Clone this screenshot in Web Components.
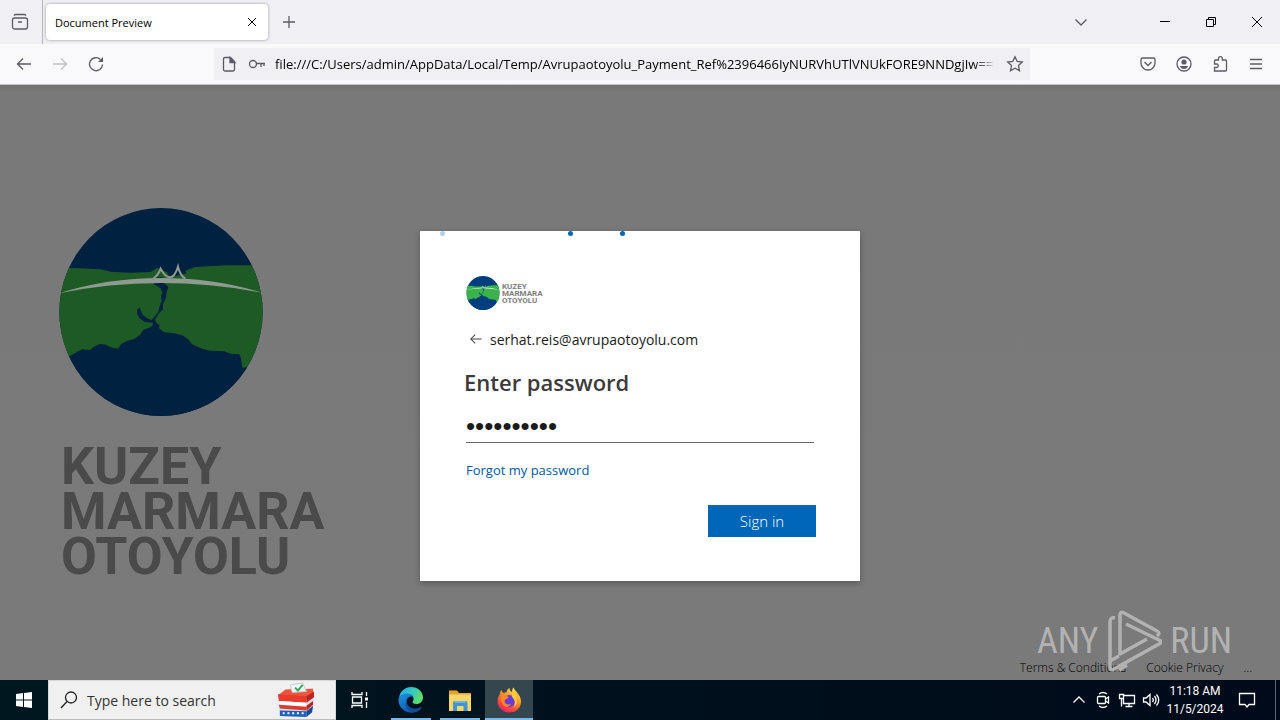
<!DOCTYPE html>
<html lang="en">
<head>
<meta charset="utf-8">
<title>Document Preview</title>
<style>
  body {
    margin: 0;
    font-family: "Open Sans", "Noto Sans", sans-serif;
    color: #15141a;
  }
</style>
</head>
<body>
<desktop-screen>
  <tab-strip slot="browser" label="Document Preview"></tab-strip>
  <nav-bar slot="browser" url="file:///C:/Users/admin/AppData/Local/Temp/Avrupaotoyolu_Payment_Ref%2396466IyNURVhUTlVNUkFORE9NNDgjIw=="></nav-bar>
  <page-view>
    <brand-logo slot="backdrop" stacked></brand-logo>
    <signin-card email="serhat.reis@avrupaotoyolu.com">
      <brand-logo></brand-logo>
    </signin-card>
    <page-footer slot="footer"></page-footer>
    <sandbox-mark slot="mark"></sandbox-mark>
  </page-view>
  <task-bar slot="taskbar"></task-bar>
</desktop-screen>

<script>
const ICONS = {
  archive: `<rect x="2.500" y="6" width="15" height="11" rx="2"/><path d="M4 3.500Q4.500 2.500 6 2.500h8q1.500 0 2 1M8 10h4"/>`,
  close: `<path d="M6 6l8 8M14 6l-8 8"/>`,
  plus: `<path d="M10 4v12M4 10h12"/>`,
  chevron: `<path d="M4.500 7.500L10 13l5.500-5.500"/>`,
  up: `<path d="M4.500 12.500L10 7l5.500 5.500"/>`,
  min: `<path d="M5 9.500h10"/>`,
  restore: `<path d="M5.500 7.500h7v7h-7zM7.500 7.500v-2h7v7h-2"/>`,
  winclose: `<path d="M5 5l10 10M15 5L5 15"/>`,
  back: `<path d="M17 10H3.500M9 4.500L3.500 10 9 15.500"/>`,
  forward: `<path d="M3 10h13.500M11 4.500l5.500 5.500-5.500 5.500"/>`,
  reload: `<path d="M16.500 10.500a6.500 6.500 0 1 1-2-5"/><path d="M17 3v5h-5z" fill="currentColor" stroke="none"/>`,
  file: `<path d="M6 3.500h5.500l4 4v8a1.500 1.500 0 0 1-1.500 1.500H6a1.500 1.500 0 0 1-1.500-1.500V5A1.500 1.500 0 0 1 6 3.500z"/><path d="M11 3.500v5h5z" fill="currentColor"/>`,
  key: `<circle cx="6" cy="10" r="3.500"/><path d="M9.500 9.500H18M14 10v3M17 10v2"/>`,
  star: `<path d="M10 2.800l2.200 4.700 5.100.6-3.800 3.500 1 5.100-4.500-2.500-4.500 2.500 1-5.100-3.800-3.500 5.100-.6z"/>`,
  pocket: `<path d="M4.500 4h11A1.500 1.500 0 0 1 17 5.500V9a7 7 0 0 1-14 0V5.500A1.500 1.500 0 0 1 4.500 4z"/><path d="M6.500 8l3.500 3.500L13.500 8"/>`,
  account: `<circle cx="10" cy="10" r="7"/><circle cx="10" cy="8" r="2.600" fill="currentColor" stroke="none"/><path d="M5.800 12h8.400q-1.200 3-4.200 3t-4.200-3z" fill="currentColor" stroke="none"/>`,
  puzzle: `<path d="M4.500 17V13.500h2a1.700 1.700 0 0 0 0-3.500h-2V7A1 1 0 0 1 5.500 6H8.500V4.500a1.900 1.900 0 0 1 3.800 0V6H15.500A1 1 0 0 1 16.500 7v9a1 1 0 0 1-1 1z"/>`,
  menu: `<path d="M4 5.500h12M4 10h12M4 14.500h12"/>`,
  search: `<circle cx="12" cy="7.500" r="5.500"/><path d="M8 11.500L2 18"/>`,
  taskview: `<path d="M2 2v2.500h10V2M2 18v-2.500h10V18M2.500 7h9v6h-9zM16.500 2v4M16.500 12v6"/><path d="M15 7.500h3v3h-3z" fill="currentColor" stroke="none"/>`,
  meet: `<rect x="4.500" y="6.500" width="8" height="7" rx="1"/><path d="M12.500 9l3-2v6l-3-2M6 4q4-3 8 0M6 16q4 3 8 0"/>`,
  network: `<path d="M7 5.500h10.500v8H6.500V9M12 13.500v3M8.500 16.500h7M2.500 4.500h4v4h-4zM4.500 8.500v8"/>`,
  volume: `<path d="M2.500 8v4h2.500l4 3.500v-11L5 8zM11.500 8q1.500 2 0 4M13.500 6q3 4 0 8M15.500 4.500q4.500 5.500 0 11"/>`,
  note: `<path d="M2.500 3.500h15v11H12L10 17l-2-2.500H2.500z"/>`
};

const APPS = {
  edge: `
    <defs>
      <linearGradient id="eg" x1="0" y1="0" x2="1" y2=".4"><stop offset="0" stop-color="#2aa6e8"/><stop offset=".55" stop-color="#32c9c4"/><stop offset="1" stop-color="#5fdc6b"/></linearGradient>
      <linearGradient id="eb" x1="0" y1="0" x2=".6" y2="1"><stop offset="0" stop-color="#1d93e0"/><stop offset="1" stop-color="#0f58b0"/></linearGradient>
    </defs>
    <path d="M1 11C2 4 7 0 13 0c7 0 12 5 12 10.500 0 4-3 6.500-6.500 6.500-2.500 0-4-1-4-2 0-.7 1-1 1-3C15.500 8.500 13 7 9.500 7 5 7 2 9 1 11z" fill="url(#eg)"/>
    <path d="M.5 12C1.500 8.500 5 6.500 9.500 6.500c3 0 5 1.500 6 3.500-4-1.500-7 1-7 5 0 5 4.500 9 10 9C16 25.500 14 26 12 25.500 4.500 24.500 0 18.500.5 12z" fill="url(#eb)"/>
    <path d="M9 13c-1 6 4 9 9 8.500 2.500 0 4-1 5-1.500.7-.3 1 .2.700.7C21.500 24 18 25.500 15 25.500 9 25 6 18 9 13z" fill="#154a96"/>`,
  files: `
    <path d="M2 3.500h8l2 2.500h12v18H2z" fill="#e5a52d"/><path d="M2 7.500h22V24H2z" fill="#fbd669"/>
    <path d="M6 24v-8a2 2 0 0 1 2-2h10.500a2 2 0 0 1 2 2v8h-4v-5H10v5z" fill="#4293cf"/><path d="M8 14h10.500v2H8z" fill="#65b9e6"/>`,
  firefox: `
    <defs>
      <linearGradient id="ff" x1=".8" y1="0" x2=".25" y2="1"><stop offset="0" stop-color="#fff04a"/><stop offset=".4" stop-color="#ff9a29"/><stop offset=".75" stop-color="#fb4540"/><stop offset="1" stop-color="#e91d72"/></linearGradient>
    </defs>
    <path d="M4 7c0-2 .5-3 1.500-4 .5 1.500 1 2.500 2 3 1-.6 2-.8 3-.8C11 3 12 1.500 13.500 1c0 2 1 3 2.500 4 0-2 .5-3.500 1.500-4.500 1 3.500 7.500 7 7.500 14 0 6.500-5 11-11.500 11S1.500 20.500 1.500 14.500C1.500 11.500 2.500 9 4 7z" fill="url(#ff)"/>
    <circle cx="13.500" cy="14" r="6" fill="#6c3bd5"/>
    <path d="M5 10q4-3 8 .5l-3.500 2q-2 2 0 4 2.500 2 5.500 0-1 3-4.500 3.500Q5 19 5 10z" fill="#ff8a24"/>
    <path d="M16 5q5 3 5 9 0 4-3 6 2-6-1-9-2-2-1-6z" fill="#ffc93c"/>`,
  ballot: `
    <path d="M1 14l8-6 29-1 1 8-2 17-6 5-28-1z" fill="#d8dce4"/>
    <path d="M1 14l8-6 29-1v4l-7 6z" fill="#f0533c"/><path d="M1 13l30 2v7L2 20z" fill="#e83b2c"/><path d="M31 15l8-5v6l-8 6z" fill="#b9261f"/>
    <path d="M2 20l29 2v4L2 24z" fill="#fff"/><path d="M2 24l29 2v4L3 28z" fill="#de3a2e"/><path d="M31 25l7-5v4l-7 6z" fill="#b9261f"/>
    <path d="M3 30l28 1v6L3 36z" fill="#1d62b8"/><path d="M31 31l7-6-1 7-6 5z" fill="#164b93"/>
    <path d="M6 33h23" stroke="#fff" stroke-width="2" stroke-dasharray="2 3"/>
    <path d="M14 3l13-2 4 9-15 1z" fill="#f2f5f4" stroke="#c5ccca"/><path d="M19 6l3 3 5-6" fill="none" stroke="#35a567" stroke-width="2"/>`
};

function icon(name, size = 20) {
  return `<svg width="${size}" height="${size}" viewBox="0 0 20 20" fill="none" stroke="currentColor" stroke-width="1.300" aria-hidden="true">${ICONS[name]}</svg>`;
}

function iconButton(name, label, extra = "") {
  return `<button type="button" aria-label="${label}" ${extra}>${icon(name)}</button>`;
}

const BUTTON_RESET = `
  svg { display: block; flex: none; }
  button {
    display: flex;
    align-items: center;
    justify-content: center;
    padding: 0;
    border: none;
    background: none;
    color: inherit;
    font: inherit;
  }
`;

class BaseElement extends HTMLElement {
  constructor() {
    super();
    this.attachShadow({ mode: "open" });
  }

  connectedCallback() {
    this.shadowRoot.innerHTML = this.template();
  }
}

class DesktopScreen extends BaseElement {
  template() {
    return `
      <style>
        :host { display: flex; flex-direction: column; min-height: 100vh; }
        main { flex: 1; display: grid; }
      </style>
      <slot name="browser"></slot>
      <main><slot></slot></main>
      <slot name="taskbar"></slot>
    `;
  }
}

class TabStrip extends BaseElement {
  template() {
    return `
      <style>
        ${BUTTON_RESET}
        :host { display: flex; align-items: stretch; height: 44px; background: #f0f0f4; color: #5b5b66; }
        .archive { width: 43px; padding-right: 2px; border-right: 1px solid #b5b5bb; }
        .tab {
          display: flex;
          align-items: center;
          justify-content: space-between;
          box-sizing: border-box;
          width: 222px;
          margin: 4px 3px;
          padding: 0 6px 0 9px;
          border-radius: 4px;
          background: #fff;
          box-shadow: 0 0 3px rgba(0, 0, 0, 0.4);
          font-size: 11px;
          color: #000;
        }
        .new { width: 36px; }
        .list { width: 36px; margin-left: auto; margin-right: 43px; }
        .win { width: 46px; color: #000; }
        .win svg, .tab svg { stroke-width: 1; }
      </style>
      ${iconButton("archive", "Recent browsing", 'class="archive"')}
      <div class="tab"><span>${this.getAttribute("label")}</span>${iconButton("close", "Close tab")}</div>
      ${iconButton("plus", "New tab", 'class="new"')}
      ${iconButton("chevron", "List all tabs", 'class="list"')}
      ${iconButton("min", "Minimize", 'class="win"')}
      ${iconButton("restore", "Restore", 'class="win"')}
      ${iconButton("winclose", "Close", 'class="win"')}
    `;
  }
}

class NavBar extends BaseElement {
  template() {
    return `
      <style>
        ${BUTTON_RESET}
        :host {
          display: flex;
          align-items: center;
          box-sizing: border-box;
          height: 41px;
          padding: 0 6px;
          background: #f9f9fb;
          border-bottom: 1px solid #c4c4c8;
          color: #5b5b66;
        }
        button { width: 36px; height: 36px; }
        button:disabled { color: #c0c0c6; }
        .field { flex: 1; min-width: 0; padding: 0 100px; }
        .url {
          display: flex;
          align-items: center;
          gap: 8px;
          height: 32px;
          padding: 0 5px;
          background: #f0f0f4;
        }
        input {
          flex: 1;
          min-width: 0;
          padding: 0;
          border: none;
          outline: none;
          background: none;
          font: inherit;
          font-size: 13px;
          color: #000;
          -webkit-mask-image: linear-gradient(to left, transparent, #000 24px);
          mask-image: linear-gradient(to left, transparent, #000 24px);
        }
      </style>
      ${iconButton("back", "Back")}
      ${iconButton("forward", "Forward", "disabled")}
      ${iconButton("reload", "Reload")}
      <div class="field">
        <div class="url">
          ${icon("file")}${icon("key")}
          <input type="text" aria-label="Address" value="${this.getAttribute("url")}">
          ${icon("star")}
        </div>
      </div>
      ${iconButton("pocket", "Save to Pocket")}
      ${iconButton("account", "Account")}
      ${iconButton("puzzle", "Extensions")}
      ${iconButton("menu", "Open menu")}
    `;
  }
}

class PageView extends BaseElement {
  template() {
    return `
      <style>
        :host {
          display: grid;
          grid-template-rows: 1fr auto;
          position: relative;
          background: linear-gradient(#727272, #797979 8px, #7a7a7a);
        }
        .backdrop, .content { grid-area: 1 / 1 / 3 / 2; display: flex; align-items: center; }
        .backdrop { padding: 22px 0 0 59px; }
        .content { justify-content: center; padding-top: 47px; }
        .footer { grid-area: 2 / 1; }
      </style>
      <div class="backdrop"><slot name="backdrop"></slot></div>
      <div class="content"><slot></slot></div>
      <div class="footer"><slot name="footer"></slot></div>
      <slot name="mark"></slot>
    `;
  }
}

class BrandLogo extends BaseElement {
  template() {
    return `
      <style>
        :host {
          --sea: #003f7d;
          --land: #3cb34a;
          --bridge: #e8f2ee;
          display: flex;
          align-items: center;
          gap: 2px;
          font: 700 8px/7px Roboto, sans-serif;
          color: #7d7d7d;
        }
        svg { display: block; width: 34px; height: 34px; }
        :host([stacked]) {
          --sea: #00213f;
          --land: #1e5a25;
          --bridge: #8f9a90;
          flex-direction: column;
          align-items: flex-start;
          gap: 28px;
          font-size: 52px;
          line-height: 45px;
          color: #4a4a4a;
        }
        :host([stacked]) svg { width: 204px; height: 208px; }
        :host([stacked]) div { padding-left: 2px; }
      </style>
      <svg viewBox="57 24 612 624" aria-hidden="true">
        <defs><clipPath id="disc"><ellipse cx="363" cy="336" rx="305" ry="312"/></clipPath></defs>
        <g clip-path="url(#disc)">
          <path d="M57 24h612v624H57z" fill="var(--sea)"/>
          <path d="M57 203l60 2 65 3 30 7 60 3 60-2 20-12 22 10 34 14 26-14 28-12 40-3 60-3h107v315H57z" fill="var(--land)"/>
          <path d="M368 204l14 14 8 14h10l10-22 8 16 22-6-14-18z" fill="var(--sea)"/>
          <path d="M57 472l33-4 16-10 20-10 24 2 12-10 18-8 18 2 14 8 22 4 10-14 14-8 26-8 16-12 10-14 20-8 8-6 0-8-24-2-16-12-7-14 0-10 8-8 4 12 6 12 16 10 10 4 8-10 12-14 4-18 6-16-2-14 4-10-6-14-20-12 10-14-2-6h20l0 14 16 14-6 20 0 12-10 20 0 16-14 14-10 18 4 8 10 8-2 8 14 12 32 4 24 6 18 12 10 14 26 12 28 8 44 2 22 8 22 0 6 12 4 30 10-2 20 10h32v150H57z" fill="var(--sea)"/>
          <path d="M57 280Q200 234 363 234T669 279Q520 249 363 249T57 280z" fill="var(--bridge)"/>
          <path d="M340 236q16-12 22-30 14 26 28 26t24-32q6 26 22 36" fill="none" stroke="var(--bridge)" stroke-width="6"/>
        </g>
      </svg>
      <div>KUZEY<br>MARMARA<br>OTOYOLU</div>
    `;
  }
}

class SigninCard extends BaseElement {
  template() {
    return `
      <style>
        ${BUTTON_RESET}
        :host {
          position: relative;
          box-sizing: border-box;
          width: 440px;
          padding: 44px;
          background: #fff;
          box-shadow: 0 2px 6px rgba(0, 0, 0, 0.3);
          font-size: 14px;
          color: #1b1b1b;
        }
        .progress i {
          position: absolute;
          top: 0;
          width: 5px;
          height: 5px;
          border-radius: 50%;
          background: #0067b8;
        }
        .progress i:nth-child(1) { left: 20px; opacity: 0.3; }
        .progress i:nth-child(2) { left: 148px; }
        .progress i:nth-child(3) { left: 200px; }
        .logo { display: flex; align-items: center; height: 36px; padding-left: 2px; }
        .identity { display: flex; align-items: center; gap: 6px; height: 24px; margin-top: 16px; padding-left: 4px; }
        .identity svg { color: #444; }
        h1 { margin: 15px 0 13px; font-size: 22px; line-height: 32px; font-weight: 600; color: #3b3b3b; }
        input {
          display: block;
          box-sizing: border-box;
          width: calc(100% - 4px);
          height: 32px;
          margin: 0 2px;
          padding: 0;
          border: none;
          border-bottom: 1px solid #666;
          outline: none;
          font: 26px "Liberation Sans", sans-serif;
          color: #1b1b1b;
        }
        a { display: block; width: fit-content; margin: 17px 2px 25px; font-size: 13px; line-height: 20px; color: #005a9e; text-decoration: none; }
        .submit { width: 108px; height: 32px; margin-left: auto; background: #0067b8; color: #fff; font-size: 15px; font-weight: 300; }
      </style>
      <div class="progress"><i></i><i></i><i></i></div>
      <div class="logo"><slot></slot></div>
      <div class="identity">
        <button type="button" aria-label="Back">${icon("back", 16)}</button>
        <span>${this.getAttribute("email")}</span>
      </div>
      <h1>Enter password</h1>
      <input type="password" aria-label="Enter password" value="0123456789" autocomplete="off">
      <a href="#">Forgot my password</a>
      <button type="button" class="submit">Sign in</button>
    `;
  }
}

class PageFooter extends BaseElement {
  template() {
    return `
      <style>
        :host { display: flex; justify-content: flex-end; gap: 20px; padding: 0 28px; font-size: 12px; line-height: 24px; font-weight: 300; }
        a { color: #000; text-decoration: none; }
      </style>
      <a href="#">Terms &amp; Conditions</a>
      <a href="#">Cookie Privacy</a>
      <a href="#" aria-label="More">...</a>
    `;
  }
}

class SandboxMark extends BaseElement {
  template() {
    return `
      <style>
        :host {
          position: absolute;
          right: 48px;
          bottom: 8px;
          display: flex;
          align-items: center;
          gap: 8px;
          font: 36px/62px "Liberation Sans Narrow", "Roboto Condensed", Roboto, sans-serif;
          color: #b2b2b2;
          pointer-events: none;
        }
        svg { display: block; }
      </style>
      <span>ANY</span>
      <svg width="56" height="62" viewBox="0 0 56 62" fill="none" stroke="currentColor" stroke-width="3.500" stroke-linejoin="round" aria-hidden="true">
        <path d="M9 8Q4 7 4 12v46q0 3 4 1l45-25q4-2 0-4L20 14"/>
        <path d="M51 26q4-3 0-5L18 3q-4-2-4 2v39l27-15"/>
        <path d="M4 51l9-5M13 60l8-5"/>
      </svg>
      <span>RUN</span>
    `;
  }
}

class TaskBar extends BaseElement {
  app(name, label, state) {
    return `<button type="button" class="app ${state}" aria-label="${label}"><svg width="26" height="26" viewBox="0 0 26 26" aria-hidden="true">${APPS[name]}</svg></button>`;
  }

  template() {
    return `
      <style>
        ${BUTTON_RESET}
        :host {
          display: flex;
          align-items: stretch;
          height: 40px;
          background: linear-gradient(to right, #00171f, #000f1c 60%, #000a1a);
          color: #fff;
        }
        .start, .view { width: 48px; }
        .search { display: flex; align-items: center; gap: 8px; box-sizing: border-box; width: 288px; padding: 0 20px 0 10px; background: #f0f0f0; color: #222; border: 1px solid #d8d8d8; border-bottom-color: #bbb; }
        .search input { flex: 1; min-width: 0; padding: 0; border: none; outline: none; background: none; font: inherit; font-size: 14px; }
        .search input::placeholder { color: #333; opacity: 1; }
        .apps { display: flex; gap: 1px; padding-left: 3px; }
        .app { position: relative; width: 48px; }
        .app::after { content: ""; position: absolute; left: 4px; right: 4px; bottom: 0; height: 2px; background: #76b9ed; }
        .active { background: #34474e; }
        .active::after { left: 0; right: 0; }
        .tray { display: flex; align-items: center; margin-left: auto; padding-right: 8px; }
        .tray button { width: 24px; height: 40px; }
        .clock { width: 64px; font-size: 12px; line-height: 18px; text-align: center; font-family: Roboto, sans-serif; }
        .tray .note { width: 40px; }
        .peek { width: 4px; border-left: 1px solid #5a6472; }
      </style>
      <button type="button" class="start" aria-label="Start">
        <svg width="16" height="16" viewBox="0 0 16 16" fill="#fff" aria-hidden="true"><path d="M0 2l7-1v6.500H0zM8 1l8-1v7.500H8zM0 8.500h7V15l-7-1zM8 8.500h8V16l-8-1z"/></svg>
      </button>
      <label class="search">
        ${icon("search")}
        <input type="text" aria-label="Search" placeholder="Type here to search">
        <svg width="38" height="36" viewBox="0 0 40 38" aria-hidden="true">${APPS.ballot}</svg>
      </label>
      <button type="button" class="view" aria-label="Task View">${icon("taskview")}</button>
      <div class="apps">
        ${this.app("edge", "Microsoft Edge", "")}
        ${this.app("files", "File Explorer", "")}
        ${this.app("firefox", "Firefox", "active")}
      </div>
      <div class="tray">
        ${iconButton("up", "Show hidden icons")}
        ${iconButton("meet", "Meet Now")}
        ${iconButton("network", "Network")}
        ${iconButton("volume", "Volume")}
        <div class="clock">11:18 AM<br>11/5/2024</div>
        ${iconButton("note", "Notifications", 'class="note"')}
      </div>
      <div class="peek"></div>
    `;
  }
}

customElements.define("desktop-screen", DesktopScreen);
customElements.define("tab-strip", TabStrip);
customElements.define("nav-bar", NavBar);
customElements.define("page-view", PageView);
customElements.define("brand-logo", BrandLogo);
customElements.define("signin-card", SigninCard);
customElements.define("page-footer", PageFooter);
customElements.define("sandbox-mark", SandboxMark);
customElements.define("task-bar", TaskBar);
</script>
</body>
</html>
